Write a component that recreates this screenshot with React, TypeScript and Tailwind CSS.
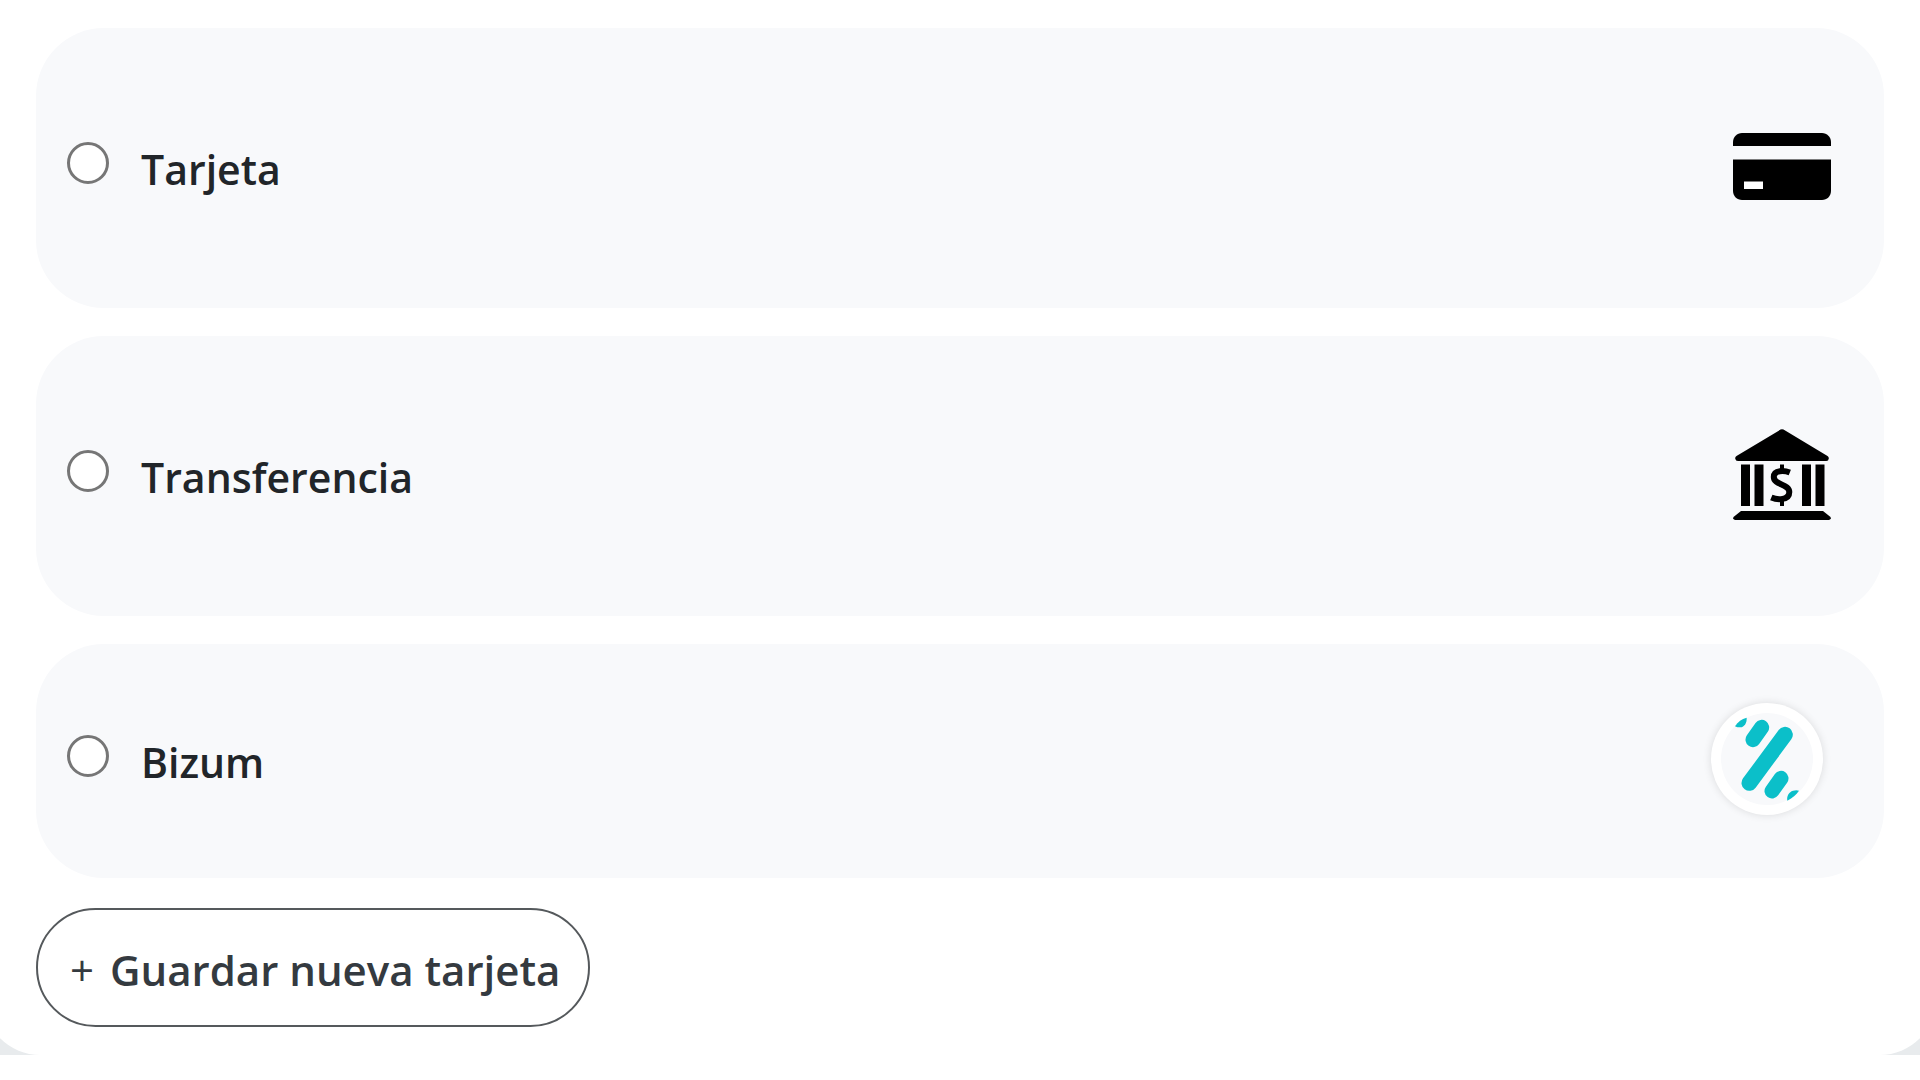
import { useState } from "react";

function CardIcon() {
  return (
    <svg viewBox="0 0 98 67" className="h-[67px] w-[98px]" aria-hidden="true">
      <path d="M0 13V9C0 4 4 0 9 0h80c5 0 9 4 9 9v4z" />
      <path d="M0 26.500h98V58c0 5-4 9-9 9H9c-5 0-9-4-9-9z" />
      <path d="M11 48.500h19v7.500H11z" fill="#fff" />
    </svg>
  );
}

function BankIcon() {
  return (
    <svg viewBox="0 0 98 91" className="h-[91px] w-[98px]" aria-hidden="true">
      <path d="M47.500 .6q1.500-.9 3 0L94.500 27q1.500 1 1.300 2.500-.3 2.500-2.500 2.500H5Q2.500 32 2.200 29.500 2 28 3.500 27z" />
      <path d="M8 35.500h9V77H8zM21.500 35.500h9V77h-9zM69 35.500h9V77h-9zM82.500 35.500h9V77h-9z" />
      <path d="M8 82h82l7.500 6q1 2.500-1.500 3H2q-2.500-.5-1.500-3z" />
      <path
        d="M56.800 43.500c-5-2-16-3-16 4.500 0 8.500 15.500 6.500 15.500 15 0 8.500-12 8-18 5.500"
        fill="none"
        stroke="#000"
        strokeWidth="6"
      />
      <path d="M49 35.500v7M49 69v8" stroke="#000" strokeWidth="4" />
    </svg>
  );
}

function BizumIcon() {
  return (
    <span className="mr-2 flex size-28 items-center justify-center rounded-full bg-white shadow-[0_0_8px_rgba(0,0,0,0.12)]">
      <svg viewBox="94 68 336 336" className="size-28" aria-hidden="true">
        <circle cx="262" cy="236" r="138" fill="#f8f9fb" />
        <g stroke="#0bbfc9" strokeLinecap="round">
          <path d="M316 163 209 308" strokeWidth="47" />
          <path d="m246 141-26 37M304 294l-27 38" strokeWidth="45" />
        </g>
        <g fill="#0bbfc9">
          <path d="M166 138c9-14 20-22 35-26 1 16-7 28-19 29-6 0-12 0-16-3z" />
          <path d="M358 331c-9 13-19 20-35 30-3-14 5-26 17-30 7-2 13-2 18 0z" />
        </g>
      </svg>
    </span>
  );
}

const methods = [
  { id: "tarjeta", name: "Tarjeta", icon: <CardIcon />, size: "h-[280px]" },
  { id: "transferencia", name: "Transferencia", icon: <BankIcon />, size: "h-[280px]" },
  { id: "bizum", name: "Bizum", icon: <BizumIcon />, size: "h-[234px]" },
];

export default function App() {
  const [selected, setSelected] = useState("");

  return (
    <div className="overflow-hidden bg-white font-['Open_Sans','Noto_Sans',sans-serif] font-semibold text-[#212529]">
      <div className="bg-[#e8ebed]">
        <main className="-mx-4 rounded-b-[56px] bg-white px-[52px] pt-7 pb-7">
          <div className="flex flex-col gap-7">
            {methods.map((m) => (
              <label
                key={m.id}
                htmlFor={m.id}
                className={`flex items-center justify-between rounded-[68px] bg-[#f8f9fb] pr-[53px] pb-1 pl-[31px] ${m.size}`}
              >
                <span className="flex items-start gap-8 pt-1.5">
                  <input
                    type="radio"
                    id={m.id}
                    name="metodo"
                    value={m.id}
                    checked={selected === m.id}
                    onChange={() => setSelected(m.id)}
                    className="mt-[7px] size-[42px] appearance-none rounded-full border-3 border-[#767676] bg-white checked:border-[12px] checked:border-[#0d6efd]"
                  />
                  <span className="text-[41px] leading-[68px]">{m.name}</span>
                </span>
                {m.icon}
              </label>
            ))}
          </div>
          <button
            type="button"
            className="mt-[30px] flex h-[119px] items-center gap-4 rounded-full border-2 border-[#55595c] pt-1 pr-7 pl-8 text-[42px] text-[#343a40]"
          >
            <span className="font-medium">+</span>
            Guardar nueva tarjeta
          </button>
        </main>
      </div>
    </div>
  );
}
